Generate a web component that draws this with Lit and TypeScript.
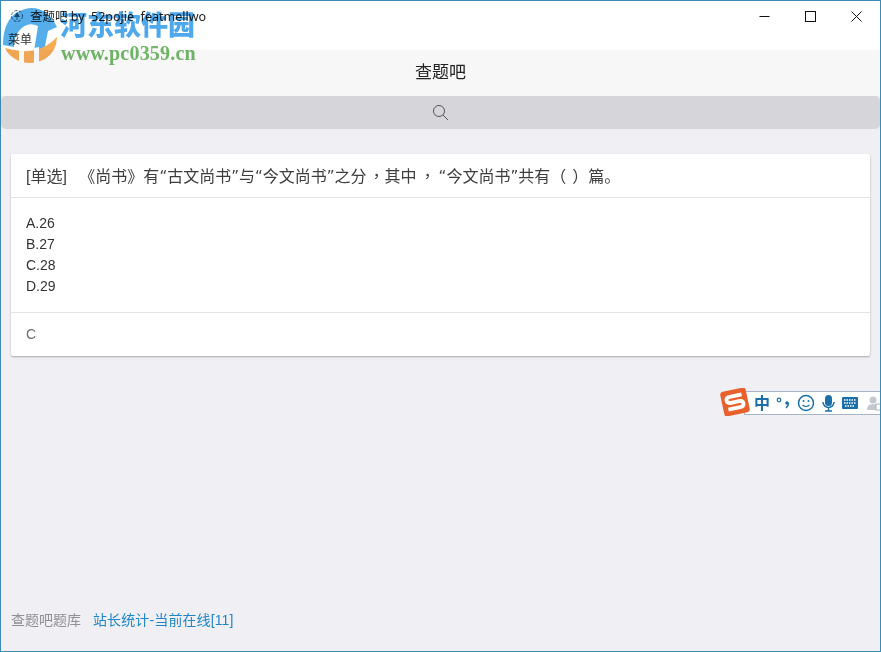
import { LitElement, html, css } from "lit";
import { customElement } from "lit/decorators.js";

@customElement("app-root")
export class AppRoot extends LitElement {
  static styles = css`
    :host {
      display: block;
      width: 881px;
      height: 652px;
      font-family: "Liberation Sans", "Noto Sans CJK SC", sans-serif;
      text-spacing-trim: space-all;
    }
    * { box-sizing: border-box; }
    .win {
      position: relative;
      width: 881px;
      height: 652px;
      border: 1px solid #3b8bb5;
      background: #efeff4;
      display: flex;
      flex-direction: column;
      overflow: hidden;
    }
    .chrome {
      height: 49px;
      background: #fff;
      display: flex;
      justify-content: space-between;
      align-items: flex-start;
      flex: none;
    }
    .chrome-left { display: flex; flex-direction: column; }
    .title-row {
      display: flex;
      align-items: center;
      gap: 6px;
      height: 29px;
      margin-bottom: 1px;
      padding-left: 9px;
      font: 12.5px "Noto Sans", "Noto Sans CJK SC", sans-serif;
      color: #222;
      white-space: pre;
    }
    .menu {
      font: 12px "Noto Sans CJK SC", sans-serif;
      color: #333;
      padding-left: 7px;
      height: 16px;
      line-height: 16px;
    }
    .controls { display: flex; padding-right: 1px; }
    .ctl {
      width: 46px;
      height: 30px;
      display: flex;
      align-items: center;
      justify-content: center;
    }
    .nav {
      height: 46px;
      flex: none;
      background: #f7f7f8;
      display: flex;
      align-items: center;
      justify-content: center;
      padding-bottom: 5px;
      font: 17px "Noto Sans CJK SC", sans-serif;
      color: #222;
    }
    .search {
      height: 33px;
      flex: none;
      background: #d5d5da;
      border-radius: 5px;
      display: flex;
      align-items: center;
      justify-content: center;
      padding-right: 1px;
    }
    .card {
      margin: 25px 10px 0;
      background: #fff;
      border-radius: 2px;
      box-shadow: 0 1px 2px rgba(0, 0, 0, 0.3);
      height: 202px;
      flex: none;
      display: flex;
      flex-direction: column;
    }
    .head {
      height: 44px;
      padding: 0 15px 2px;
      display: flex;
      align-items: center;
      border-bottom: 1px solid #e3e3e6;
      font-size: 16px;
      color: #3d3d3d;
      white-space: pre;
      flex: none;
    }
    .head-line { display: block; }
    .tc { font-family: "Noto Sans CJK TC", sans-serif; }
    .q { font-family: "DejaVu Sans", sans-serif; font-size: 15px; }
    .book { margin-left: 8px; }
    .comma-a { margin-left: 2px; }
    .comma-b { margin: 0 3px; }
    .paren-gap { margin-left: 6px; }
    .opts {
      height: 115px;
      padding: 15px 15px 0;
      border-bottom: 1px solid #e3e3e6;
      font-size: 14px;
      line-height: 21px;
      color: #333;
      flex: none;
    }
    .ans {
      flex: 1;
      padding: 0 15px 2px;
      display: flex;
      align-items: center;
      font-size: 14px;
      color: #6d6d72;
    }
    .foot {
      margin-top: auto;
      height: 43px;
      padding: 0 10px;
      display: flex;
      align-items: flex-start;
      gap: 12px;
      font: 14px/24px "Liberation Sans", "Noto Sans CJK SC", sans-serif;
      color: #8f8f94;
    }
    .foot a { color: #1f85c9; text-decoration: none; letter-spacing: 0.12px; }
    .mark {
      position: absolute;
      left: 0;
      top: 0;
      width: 210px;
      height: 66px;
      pointer-events: none;
      mix-blend-mode: multiply;
    }
    .mark svg { position: absolute; left: 0; top: 0; }
    .mark-cn {
      position: absolute;
      left: 59px;
      top: 7px;
      font: 900 27px/32px "Noto Sans CJK SC", sans-serif;
      color: #4ea8ec;
      white-space: nowrap;
    }
    .mark-url {
      position: absolute;
      left: 60px;
      top: 41px;
      font: 700 20px/22px "Liberation Serif", serif;
      letter-spacing: 0.2px;
      color: #72b968;
      white-space: nowrap;
    }
    .ime {
      position: absolute;
      left: 719px;
      top: 387px;
      width: 162px;
      height: 28px;
    }
    .ime-bar {
      position: absolute;
      left: 24px;
      right: 0;
      top: 3px;
      height: 24px;
      background: #fff;
      border: 1px solid #a9b3c6;
      border-right: 0;
    }
    .ime svg { position: absolute; left: 0; top: 0; }
    .ime-zh {
      position: absolute;
      left: 34px;
      top: 3px;
      font: 700 16px/23px "Noto Sans CJK SC", sans-serif;
      color: #1b6fa8;
    }
  `;

  render() {
    return html`
      <div class="win">
        <div class="chrome">
          <div class="chrome-left">
            <div class="title-row">
              <svg width="14" height="14" viewBox="0 0 14 14" fill="none" stroke="#4a6a80" stroke-width="1">
                <circle cx="7" cy="7" r="5.500" stroke-dasharray="3 1.500" />
                <path d="M7 3 L10 8 H4 Z" fill="#4a6a80" stroke="none" />
                <path d="M7 8V11" />
              </svg>
              <span>查题吧 by  52pojie  featmellwo</span>
            </div>
            <div class="menu">菜单</div>
          </div>
          <div class="controls">
            <div class="ctl">
              <svg width="11" height="11" viewBox="0 0 11 11"><path d="M0.5 5.5H10.5" stroke="#111" fill="none" /></svg>
            </div>
            <div class="ctl">
              <svg width="11" height="11" viewBox="0 0 11 11"><rect x="0.5" y="0.5" width="10" height="10" stroke="#111" fill="none" /></svg>
            </div>
            <div class="ctl">
              <svg width="11" height="11" viewBox="0 0 11 11"><path d="M0.5 0.5L10.5 10.5M10.5 0.5L0.5 10.5" stroke="#111" fill="none" /></svg>
            </div>
          </div>
        </div>
        <div class="nav">查题吧</div>
        <div class="search">
          <svg width="17" height="17" viewBox="0 0 17 17" fill="none" stroke="#555" stroke-width="1">
            <circle cx="7" cy="7" r="5.500" />
            <path d="M11 11L16 16" />
          </svg>
        </div>
        <div class="card">
          <div class="head"><span class="head-line">[单选] <span class="book">《尚书》</span>有<span class="q">“</span>古文尚书<span class="q">”</span>与<span class="q">“</span>今文尚书<span class="q">”</span>之分<span class="tc comma-a">，</span>其中<span class="tc comma-b">，</span><span class="q">“</span>今文尚书<span class="q">”</span>共有<span class="tc">（</span><span class="tc paren-gap">）</span>篇。</span></div>
          <div class="opts">
            <div>A.26</div>
            <div>B.27</div>
            <div>C.28</div>
            <div>D.29</div>
          </div>
          <div class="ans">C</div>
        </div>
        <div class="foot">
          <span>查题吧题库</span>
          <a>站长统计-当前在线[11]</a>
        </div>

        <div class="mark">
          <svg width="62" height="66" viewBox="0 0 62 66">
            <path d="M2 44 Q2 14 24 8 Q44 3 56 26 L47 30 L43 50 L33 50 L37 25 Q26 20 18 30 Q12 38 13 46 Z" fill="#55aeea" />
            <path d="M4 47 Q22 52 35 49 Q48 45 56 36 Q56 50 44 58 Q30 65 18 60 Q7 55 4 47 Z" fill="#f7ab55" />
            <path d="M18 48 L23 49 L23 64 L18 63 Z M33 47 L38 46 L38 64 L33 64 Z" fill="#fff" />
          </svg>
          <div class="mark-cn">河东软件园</div>
          <div class="mark-url">www.pc0359.cn</div>
        </div>

        <div class="ime">
          <div class="ime-bar"></div>
          <svg width="162" height="28" viewBox="0 0 162 28">
            <g transform="rotate(-12 15 14)">
              <rect x="2" y="1.500" width="26" height="25" rx="3" fill="#e8602c" />
              <path d="M23 8H11Q7 8 7 11T11 14H19Q23 14 23 17T19 20H7" fill="none" stroke="#fff" stroke-width="3.800" />
            </g>
            <circle cx="59" cy="12" r="1.800" fill="none" stroke="#1b6fa8" stroke-width="1.200" />
            <circle cx="67" cy="15" r="1.800" fill="#1b6fa8" />
            <path d="M68.500 15q0 3-2.500 5" fill="none" stroke="#1b6fa8" stroke-width="1.500" />
            <circle cx="86" cy="15" r="7.500" fill="none" stroke="#1b6fa8" stroke-width="1.500" />
            <circle cx="83.500" cy="13" r="1" fill="#1b6fa8" />
            <circle cx="88.500" cy="13" r="1" fill="#1b6fa8" />
            <path d="M82.500 17q3.500 3 7 0" fill="none" stroke="#1b6fa8" stroke-width="1.200" />
            <rect x="105" y="7" width="7" height="11" rx="3.500" fill="#1b6fa8" />
            <path d="M103 14a5.500 5.500 0 0 0 11 0M108.500 19.500V23M105 23H112" fill="none" stroke="#1b6fa8" stroke-width="1.500" />
            <rect x="122" y="9" width="16" height="12" rx="1" fill="#1b6fa8" />
            <path d="M124 12H136M124 15H136M125 18H135" stroke="#fff" stroke-width="1.300" stroke-dasharray="1.500 1" fill="none" />
            <circle cx="153" cy="12" r="3.500" fill="#c3c9ce" />
            <path d="M147 22q0-6 6-6t6 6Z" fill="#c3c9ce" />
            <rect x="156" y="16" width="6" height="6" fill="#fff" stroke="#aab1b7" />
          </svg>
          <span class="ime-zh">中</span>
        </div>
      </div>
    `;
  }
}
